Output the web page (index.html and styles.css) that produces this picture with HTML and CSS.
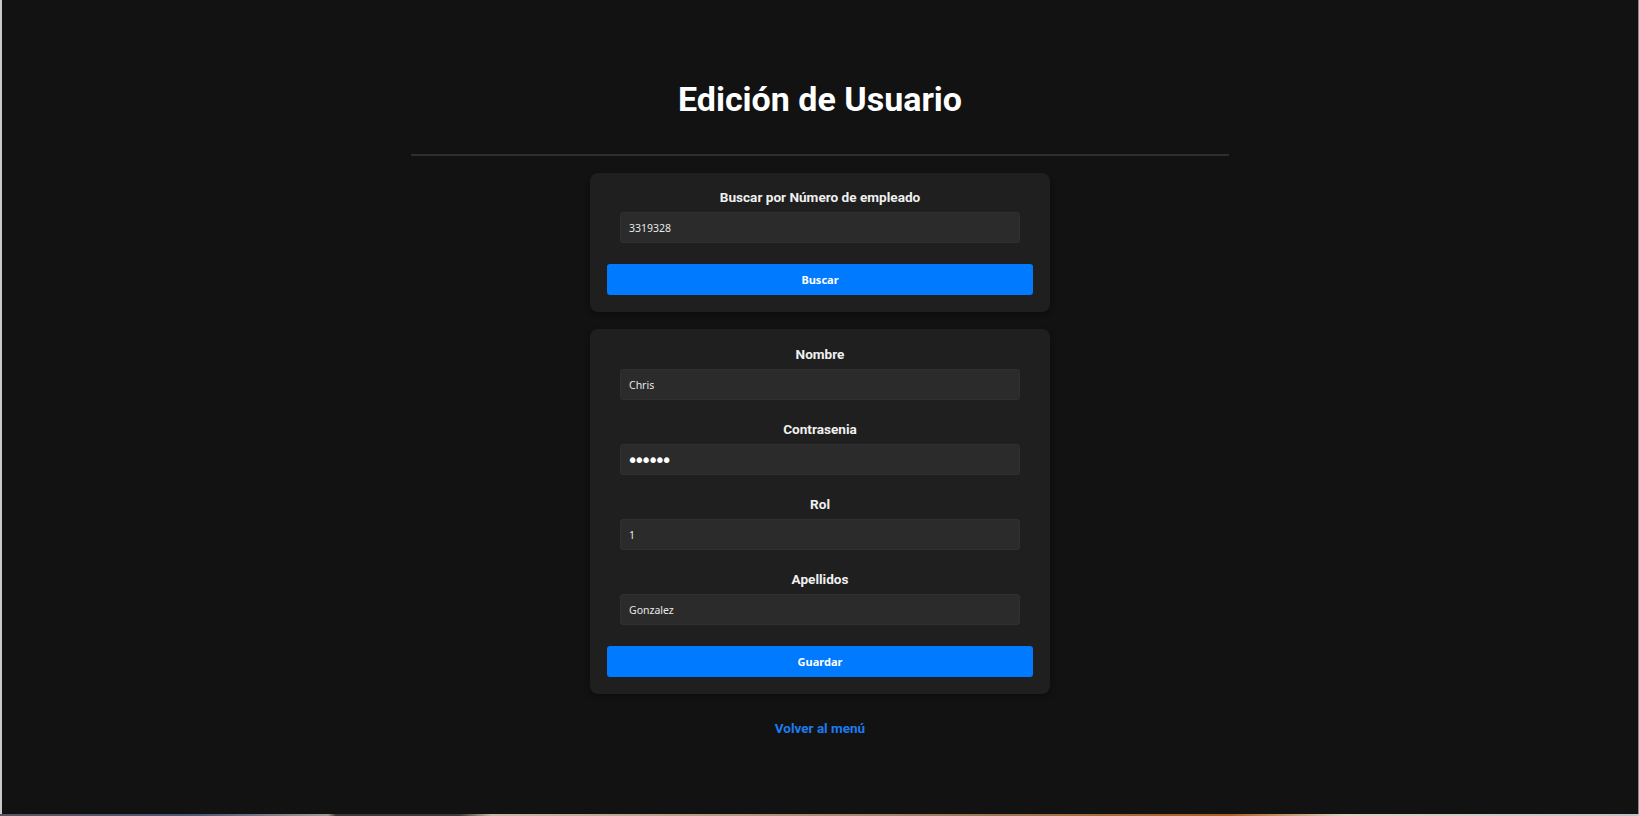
FILE: index.html
```html
<!DOCTYPE html>
<html lang="es">
<head>
<meta charset="utf-8">
<title>Edición de Usuario</title>
<link rel="stylesheet" href="styles.css">
</head>
<body>
<div class="window">
  <main class="page">
    <h1 class="title">Edición de Usuario</h1>
    <hr class="divider">
    <section class="card">
      <label class="field-label" for="emp">Buscar por Número de empleado</label>
      <input class="field-input" id="emp" type="text" value="3319328">
      <button class="btn" type="button">Buscar</button>
    </section>
    <section class="card card-form">
      <div class="field">
        <label class="field-label" for="nombre">Nombre</label>
        <input class="field-input" id="nombre" type="text" value="Chris">
      </div>
      <div class="field">
        <label class="field-label" for="pass">Contrasenia</label>
        <input class="field-input pass" id="pass" type="password" value="secret">
      </div>
      <div class="field">
        <label class="field-label" for="rol">Rol</label>
        <input class="field-input" id="rol" type="text" value="1">
      </div>
      <div class="field">
        <label class="field-label" for="ape">Apellidos</label>
        <input class="field-input" id="ape" type="text" value="Gonzalez">
      </div>
      <button class="btn" type="button">Guardar</button>
    </section>
    <a class="back-link" href="#">Volver al menú</a>
  </main>
</div>
<div class="desktop-strip"></div>
</body>
</html>
```

FILE: styles.css
```css
html, body {
  margin: 0;
  padding: 0;
  height: 100%;
  background: #121212;
}

body {
  display: flex;
  flex-direction: column;
  font-family: Roboto, "Liberation Sans", sans-serif;
  color: #f2f2f2;
}

.window {
  flex: 1;
  border-left: 2px solid #c9c9c9;
  border-right: 1px solid #8a8a8a;
  background: #121212;
}

.page {
  display: flex;
  flex-direction: column;
  align-items: center;
  padding-top: 79px;
}

.title {
  margin: 0;
  font-size: 34px;
  line-height: 40px;
  font-weight: 700;
  color: #ffffff;
}

.divider {
  width: 50%;
  height: 2px;
  border: none;
  background: #2e2e2e;
  margin: 35px 0 17px;
}

.card {
  box-sizing: border-box;
  width: 460px;
  padding: 16px 17px 17px;
  margin-bottom: 17px;
  background: #1f1f1f;
  border-radius: 8px;
  box-shadow: 0 2px 6px rgba(0, 0, 0, 0.35);
  display: flex;
  flex-direction: column;
  align-items: center;
}

.card-form {
  padding-top: 17px;
}

.field {
  display: flex;
  flex-direction: column;
  align-items: center;
  width: 100%;
  margin-bottom: 21px;
}

.field-label {
  font-size: 13.6px;
  line-height: 16px;
  font-weight: 700;
  color: #f0f0f0;
  margin-bottom: 7px;
}

.field-input {
  box-sizing: border-box;
  width: 400px;
  height: 31px;
  padding: 0 8px;
  background: #2b2b2b;
  border: 1px solid #303030;
  border-radius: 3px;
  color: #e8e8e8;
  font-family: "Noto Sans", "DejaVu Sans", sans-serif;
  font-size: 10.5px;
  outline: none;
}

.card > .field-input {
  margin-bottom: 21px;
}

.field-input.pass {
  font-family: "DejaVu Sans", sans-serif;
  font-size: 19px;
  letter-spacing: -4.4px;
  padding-left: 6px;
  color: #ffffff;
}

.btn {
  width: 100%;
  height: 31px;
  border: none;
  border-radius: 3px;
  background: #007bff;
  color: #ffffff;
  font-family: "Noto Sans", "DejaVu Sans", sans-serif;
  font-size: 11px;
  font-weight: 700;
  cursor: pointer;
}

.back-link {
  margin-top: 9px;
  font-size: 13.5px;
  line-height: 16px;
  font-weight: 700;
  color: #1a7cf0;
  text-decoration: none;
}

.desktop-strip {
  height: 2px;
  background: linear-gradient(90deg, #5a5560 0%, #4a5a78 12%, #a09890 20%, #3a3a3a 20.5%, #3a3a3a 28%, #c8b8a8 30%, #9a7858 60%, #b06020 75%, #d8d0c0 82%, #c0c0c8 100%);
}
```
